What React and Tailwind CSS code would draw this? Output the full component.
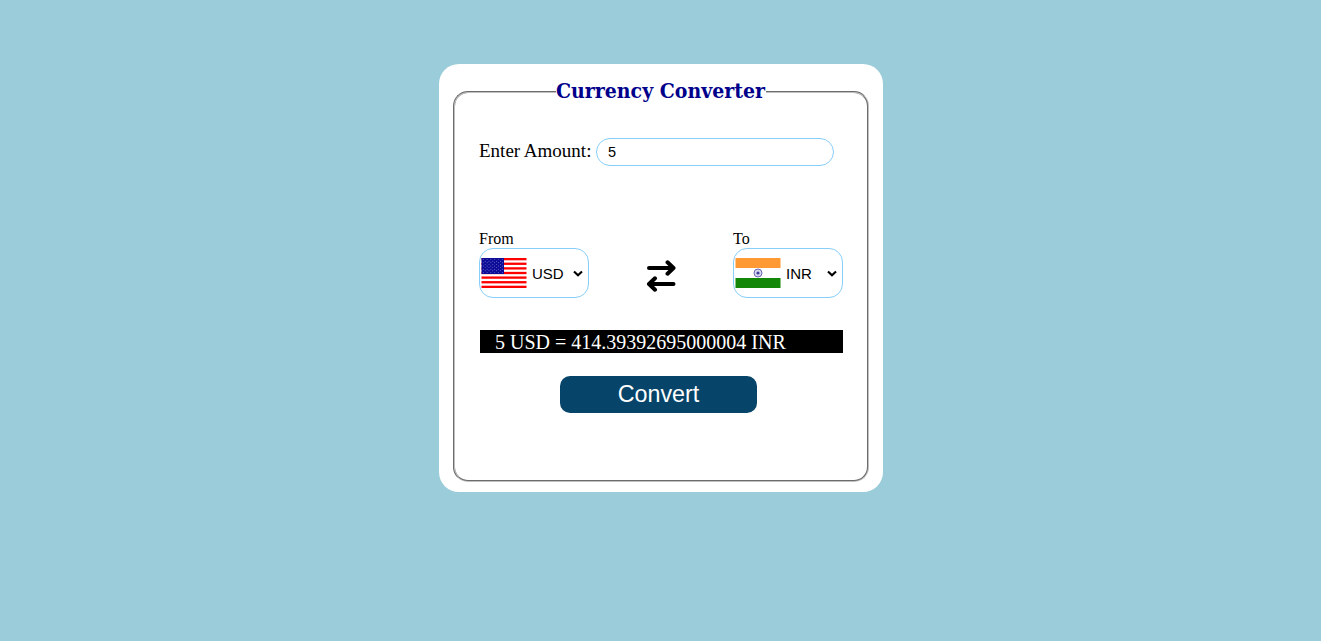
const STAR_ROWS = [0, 1, 2, 3, 4, 5, 6, 7, 8];
const STRIPES = [0, 1, 2, 3, 4, 5, 6];

function UsFlag() {
  return (
    <svg className="h-[30px] w-[46px] shrink-0" viewBox="0 0 46 30" preserveAspectRatio="none">
      <rect width="46" height="30" fill="#fff" />
      {STRIPES.map((i) => (
        <rect key={i} x="0.5" y={(i * 60) / 13} width="45" height={30 / 13} fill="#f00" />
      ))}
      <rect x="0.5" width="22.5" height="16" fill="#0c0c98" />
      {STAR_ROWS.map((r) =>
        Array.from({ length: r % 2 ? 5 : 6 }, (_, c) => (
          <circle key={`${r}-${c}`} cx={2.3 + c * 3.8 + (r % 2 ? 1.9 : 0)} cy={1.6 + r * 1.6} r="0.45" fill="#b0b0e4" />
        ))
      )}
    </svg>
  );
}

function IndiaFlag() {
  return (
    <svg className="h-[30px] w-[46px] shrink-0" viewBox="0 0 46 30">
      <rect width="46" height="30" fill="#fff" />
      <rect x="0.5" width="45" height="10" fill="#ff9933" />
      <rect x="0.5" y="20" width="45" height="10" fill="#138808" />
      <circle cx="23" cy="15" r="4" fill="#d8d8ee" stroke="#5a5ab0" strokeWidth="0.9" />
      <circle cx="23" cy="15" r="1.6" fill="#4040a0" />
    </svg>
  );
}

function CurrencyBox({ label, code, flag }) {
  return (
    <div className="w-[110px]">
      <div className="h-[18px] text-[16px] leading-[18px]">{label}</div>
      <div className="flex h-[50px] items-center rounded-[14px] border border-[#87cefa] pr-[5px] pl-px">
        {flag}
        <span className="ml-[5px] flex-1 pt-[2px] font-['Liberation_Sans',sans-serif] text-[15px] leading-[18px]">{code}</span>
        <svg className="mt-px h-[7px] w-[10px]" viewBox="0 0 10 7" fill="none" stroke="#000" strokeWidth="2.1">
          <path d="M1 1.5 5 5.3 9 1.5" />
        </svg>
      </div>
    </div>
  );
}

export default function App() {
  return (
    <main className="flex h-[641px] justify-center bg-[#9bccd9] pt-16 font-['Liberation_Serif',serif] text-black">
      <section className="ml-px h-[428px] w-[444px] rounded-[20px] bg-white pt-[14px] pl-[14px]">
        <fieldset className="h-[404px] w-[416px] rounded-[15px] border-2 border-[#c0c0c0] px-6 [border-style:groove]">
          <legend className="mx-auto h-7 w-[210px] font-['DejaVu_Serif_Condensed','DejaVu_Serif',serif] text-[21px] leading-[26px] font-bold whitespace-nowrap text-[#00008b]">
            <span className="inline-block origin-left scale-x-[1.002]">Currency Converter</span>
          </legend>
          <div className="flex items-center pt-8">
            <label htmlFor="amount" className="w-[117px] pb-[2px] text-[19px] leading-[26px] whitespace-nowrap">Enter Amount:</label>
            <input
              id="amount"
              defaultValue="5"
              className="h-7 w-[238px] rounded-[14px] border border-[#87cefa] px-[11px] pb-px font-['Liberation_Sans',sans-serif] text-[14.5px]"
            />
          </div>
          <div className="mt-16 flex justify-between">
            <CurrencyBox label="From" code="USD" flag={<UsFlag />} />
            <svg className="mt-[30px] h-8 w-[30px]" viewBox="0 0 30 32" fill="none" stroke="#000" strokeWidth="4" strokeLinecap="round" strokeLinejoin="round">
              <path d="M3 8H27.5M21.5 2.3l6 5.7-6 5.7M27.5 24H3M9 18.3l-6 5.7 6 5.7" />
            </svg>
            <CurrencyBox label="To" code="INR" flag={<IndiaFlag />} />
          </div>
          <div className="mt-8 ml-px h-[23px] bg-black pl-[15px] text-[20px] leading-[24px] text-white">
            5 USD = 414.39392695000004 INR
          </div>
          <button className="mt-[23px] ml-[81px] block h-[37px] w-[197px] rounded-[10px] bg-[#064469] pb-px font-['Liberation_Sans',sans-serif] text-[23.3px] leading-[35px] text-white">
            Convert
          </button>
        </fieldset>
      </section>
    </main>
  );
}
